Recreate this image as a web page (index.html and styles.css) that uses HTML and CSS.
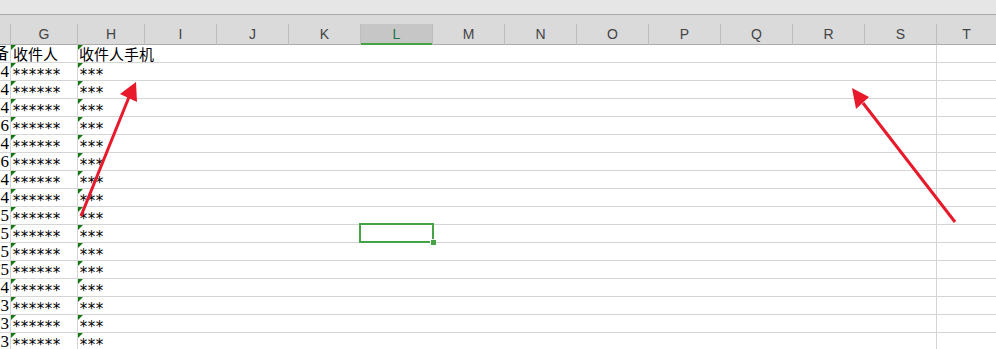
FILE: index.html
```html
<!DOCTYPE html>
<html lang="zh-CN">
<head>
    <meta charset="UTF-8">
    <title>收件人</title>
    <link rel="stylesheet" href="styles.css">
</head>
<body>
    <div class="topbar"></div>
    <div class="colheads">
        <div class="ch narrow"></div>
        <div class="ch w67">G</div>
        <div class="ch w67">H</div>
        <div class="ch">I</div>
        <div class="ch">J</div>
        <div class="ch">K</div>
        <div class="ch active">L</div>
        <div class="ch">M</div>
        <div class="ch">N</div>
        <div class="ch">O</div>
        <div class="ch">P</div>
        <div class="ch">Q</div>
        <div class="ch">R</div>
        <div class="ch">S</div>
        <div class="ch last">T</div>
    </div>
    <div class="sheet">
        <div class="row"><div class="c f">备</div><div class="c g mark">收件人</div><div class="c h mark">收件人手机</div><div class="c mid"></div><div class="c t"></div></div>
        <div class="row"><div class="c f">4</div><div class="c g mark stars">******</div><div class="c h mark stars">***</div><div class="c mid"></div><div class="c t"></div></div>
        <div class="row"><div class="c f">4</div><div class="c g mark stars">******</div><div class="c h mark stars">***</div><div class="c mid"></div><div class="c t"></div></div>
        <div class="row"><div class="c f">4</div><div class="c g mark stars">******</div><div class="c h mark stars">***</div><div class="c mid"></div><div class="c t"></div></div>
        <div class="row"><div class="c f">6</div><div class="c g mark stars">******</div><div class="c h mark stars">***</div><div class="c mid"></div><div class="c t"></div></div>
        <div class="row"><div class="c f">4</div><div class="c g mark stars">******</div><div class="c h mark stars">***</div><div class="c mid"></div><div class="c t"></div></div>
        <div class="row"><div class="c f">6</div><div class="c g mark stars">******</div><div class="c h mark stars">***</div><div class="c mid"></div><div class="c t"></div></div>
        <div class="row"><div class="c f">4</div><div class="c g mark stars">******</div><div class="c h mark stars">***</div><div class="c mid"></div><div class="c t"></div></div>
        <div class="row"><div class="c f">4</div><div class="c g mark stars">******</div><div class="c h mark stars">***</div><div class="c mid"></div><div class="c t"></div></div>
        <div class="row"><div class="c f">5</div><div class="c g mark stars">******</div><div class="c h mark stars">***</div><div class="c mid"></div><div class="c t"></div></div>
        <div class="row"><div class="c f">5</div><div class="c g mark stars">******</div><div class="c h mark stars">***</div><div class="c mid"></div><div class="c t"></div></div>
        <div class="row"><div class="c f">5</div><div class="c g mark stars">******</div><div class="c h mark stars">***</div><div class="c mid"></div><div class="c t"></div></div>
        <div class="row"><div class="c f">5</div><div class="c g mark stars">******</div><div class="c h mark stars">***</div><div class="c mid"></div><div class="c t"></div></div>
        <div class="row"><div class="c f">4</div><div class="c g mark stars">******</div><div class="c h mark stars">***</div><div class="c mid"></div><div class="c t"></div></div>
        <div class="row"><div class="c f">3</div><div class="c g mark stars">******</div><div class="c h mark stars">***</div><div class="c mid"></div><div class="c t"></div></div>
        <div class="row"><div class="c f">3</div><div class="c g mark stars">******</div><div class="c h mark stars">***</div><div class="c mid"></div><div class="c t"></div></div>
        <div class="row"><div class="c f">3</div><div class="c g mark stars">******</div><div class="c h mark stars">***</div><div class="c mid"></div><div class="c t"></div></div>

        <!-- active cell L11 -->
        <div class="selection"><span class="handle"></span></div>
    </div>

    <!-- red annotation arrows -->
    <svg class="arrows" width="996" height="349" viewBox="0 0 996 349">
        <line x1="81" y1="216" x2="129" y2="97" />
        <polygon points="136,82 120,94 137,102" />
        <line x1="955" y1="222" x2="863" y2="103" />
        <polygon points="852,88 869,97 856,109" />
    </svg>
</body>
</html>
```

FILE: styles.css
```css
body {
    margin: 0;
    width: 996px;
    height: 349px;
    overflow: hidden;
    background: #fff;
    position: relative;
    font-family: "Liberation Sans", Arial, sans-serif;
}

.topbar {
    height: 14px;
    background: #e6e6e6;
    border-bottom: 1px solid #a9a9a9;
}

/* column letters */
.colheads {
    display: flex;
    align-items: flex-end;
    height: 30px;
    box-sizing: border-box;
    background: #dadada;
    border-bottom: 1px solid #ababab;
}
.ch {
    flex: 0 0 72px;
    height: 21px;
    margin-bottom: -1px;
    box-sizing: border-box;
    border-right: 1px solid #bdbdbd;
    text-align: center;
    font-size: 14px;
    line-height: 21px;
    color: #444;
}
.ch.narrow {
    flex-basis: 11px;
}
.ch.w67 {
    flex-basis: 67px;
}
.ch.last {
    flex: 1;
    border-right: none;
}
.ch.active {
    background: #c6c6c6;
    color: #217346;
    box-shadow: inset 0 -2px 0 #45a246;
}

/* grid body */
.sheet {
    position: relative;
}
.row {
    display: grid;
    grid-template-columns: 11px 67px 67px 792px 1fr;
    height: 18px;
    box-sizing: border-box;
    border-bottom: 1px solid #d4d4d4;
}
.c {
    position: relative;
    height: 17px;
    line-height: 17px;
    white-space: nowrap;
    font-family: "Noto Sans CJK SC", sans-serif;
    font-size: 15px;
    color: #000;
}
.f {
    display: flex;
    justify-content: flex-end;
    overflow: hidden;
    border-right: 1px solid #d4d4d4;
    font-family: "Liberation Serif", "Noto Sans CJK SC", serif;
    font-size: 17px;
    padding-right: 1px;
}
.g {
    border-right: 1px solid #d4d4d4;
    padding-left: 2px;
}
.h {
    padding-left: 1px;
}
.mid {
    border-right: 1px solid #d4d4d4;
}
.stars {
    font-family: "DejaVu Sans Mono", monospace;
    font-size: 15px;
    letter-spacing: -1.03px;
    line-height: 17px;
    padding-top: 4px;
    height: 13px;
    padding-left: 1px;
}

/* small green corner marker (number stored as text) */
.mark::before {
    content: "";
    position: absolute;
    top: 0;
    left: 0;
    border-top: 5px solid #13780f;
    border-right: 5px solid transparent;
}

.selection {
    position: absolute;
    left: 359px;
    top: 178px;
    width: 75px;
    height: 20px;
    box-sizing: border-box;
    border: 2px solid #45a246;
}
.handle {
    position: absolute;
    right: -4px;
    bottom: -4px;
    width: 5px;
    height: 5px;
    background: #45a246;
    border: 1px solid #fff;
    border-width: 1px 0 0 1px;
}

.arrows {
    position: absolute;
    left: 0;
    top: 0;
    pointer-events: none;
}
.arrows line {
    stroke: #e8192a;
    stroke-width: 3;
}
.arrows polygon {
    fill: #e8192a;
}
```
